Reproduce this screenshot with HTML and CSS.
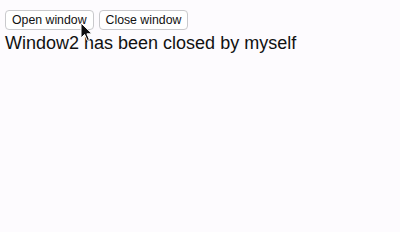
FILE: index.html
```html
<!DOCTYPE html>
<html lang="en">
	<head>
		<meta charset="UTF-8" />
		<title>Window</title>
		<link rel="stylesheet" href="styles.css">
	</head>
	<body>
		<div class="buttons">
			<button class="btn">Open window</button>
			<button class="btn">Close window</button>
		</div>
		<div class="message">Window2 has been closed by myself</div>
		<svg class="cursor" width="14" height="20" viewBox="0 0 14 20">
			<path d="M1 1 L1 16 L4.6 12.4 L7.2 18.5 L9.4 17.6 L6.9 11.8 L12 11.8 Z" fill="#111" stroke="#fff" stroke-width="1"/>
		</svg>
	</body>
</html>
```
FILE: styles.css
```css
body {
	margin: 0;
	padding: 10px 5px;
	background: #fdfbfe;
	font-family: 'Liberation Sans', Arial, sans-serif;
	color: #111;
}

.buttons {
	display: flex;
	gap: 5px;
}

.btn {
	height: 20px;
	padding: 0 6px;
	background: #fff;
	border: 1px solid #c9c9cc;
	border-radius: 4px;
	font-family: 'Liberation Sans', Arial, sans-serif;
	font-size: 12.3px;
	color: #111;
}

.message {
	font-size: 18px;
	line-height: 20px;
	margin-top: 3px;
}

.cursor {
	position: absolute;
	left: 80px;
	top: 22px;
}
```
